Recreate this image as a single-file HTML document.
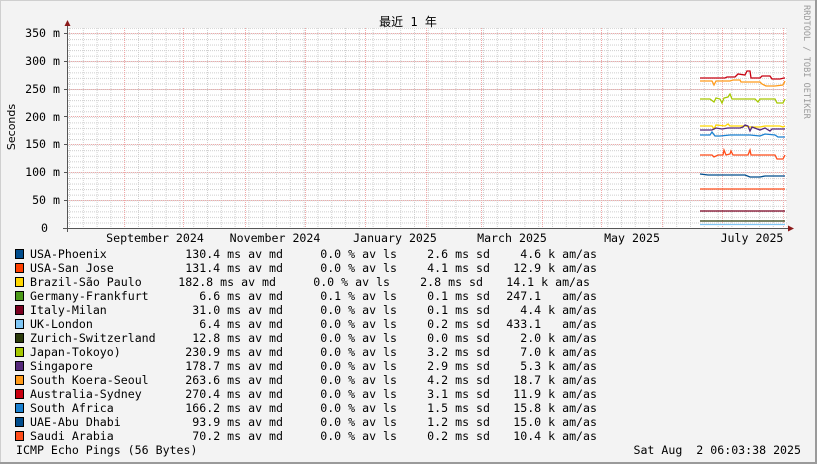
<!DOCTYPE html>
<html><head><meta charset="utf-8"><style>
html,body{margin:0;padding:0;background:#f3f3f3;}
svg{display:block;}
text{font-family:"DejaVu Sans Mono","Liberation Mono",monospace;font-size:11.6px;fill:#000;white-space:pre;}
</style></head><body>
<svg width="817" height="464" viewBox="0 0 817 464" xmlns="http://www.w3.org/2000/svg">
<defs>
<pattern id="hmin" x="0" y="228" width="800" height="5.56" patternUnits="userSpaceOnUse">
<line x1="0" y1="0.5" x2="800" y2="0.5" stroke="#d0d0d0" stroke-width="1" stroke-dasharray="1,1"/>
</pattern>
<pattern id="vmin" x="69" y="0" width="13.8" height="300" patternUnits="userSpaceOnUse">
<line x1="0.5" y1="0" x2="0.5" y2="300" stroke="#d0d0d0" stroke-width="1" stroke-dasharray="1,1"/>
</pattern>
</defs>
<rect x="0" y="0" width="817" height="464" fill="#f3f3f3"/>
<rect x="0.5" y="0.5" width="816" height="463" fill="none" stroke="#cfcfcf"/>
<line x1="0" y1="463" x2="817" y2="463" stroke="#9a9a9a" stroke-width="2"/>
<line x1="816" y1="0" x2="816" y2="464" stroke="#9a9a9a" stroke-width="2"/>
<rect x="67" y="28" width="720" height="200" fill="#fff"/>
<rect x="67" y="28" width="720" height="200" fill="url(#hmin)"/>
<rect x="67" y="28" width="720" height="200" fill="url(#vmin)"/>
<g stroke="#f0a8a8" stroke-width="1" stroke-dasharray="1,1">
<line x1="67" y1="200.5" x2="787" y2="200.5"/><line x1="67" y1="172.5" x2="787" y2="172.5"/>
<line x1="67" y1="144.5" x2="787" y2="144.5"/><line x1="67" y1="116.5" x2="787" y2="116.5"/>
<line x1="67" y1="89.5" x2="787" y2="89.5"/><line x1="67" y1="61.5" x2="787" y2="61.5"/>
<line x1="67" y1="33.5" x2="787" y2="33.5"/>
<line x1="124.5" y1="28" x2="124.5" y2="228"/><line x1="183.5" y1="28" x2="183.5" y2="228"/>
<line x1="245.5" y1="28" x2="245.5" y2="228"/><line x1="305.5" y1="28" x2="305.5" y2="228"/>
<line x1="365.5" y1="28" x2="365.5" y2="228"/><line x1="426.5" y1="28" x2="426.5" y2="228"/>
<line x1="481.5" y1="28" x2="481.5" y2="228"/><line x1="542.5" y1="28" x2="542.5" y2="228"/>
<line x1="601.5" y1="28" x2="601.5" y2="228"/><line x1="662.5" y1="28" x2="662.5" y2="228"/>
<line x1="722.5" y1="28" x2="722.5" y2="228"/><line x1="783.5" y1="28" x2="783.5" y2="228"/>
</g>
<g fill="none" stroke-width="1.3">
<polyline stroke="#ff9a1a" points="700,81 712,81 714,85 716,81 730,81 733,80 740,80 741,82 760,82 762,84 766,86 775,86 783,85 785,81"/>
<polyline stroke="#c80010" points="700,78 725,78 727,77 735,77 738,74 745,75 747,71 750,71 751,78 760,78 762,76 770,76 772,79 780,79 784,78 785,78"/>
<polyline stroke="#a6c800" points="700,99 710,99 714,102 716,98 720,99 722,103 724,98 728,97 730,94 732,99 755,99 758,102 760,99 775,99 777,103 783,103 785,99"/>
<polyline stroke="#ffd700" points="700,126 712,126 714,129 716,125 725,126 728,124 730,126 740,126 745,126 750,127 760,127 765,126 780,126 783,127 785,126"/>
<polyline stroke="#55287a" points="700,130 712,130 716,128 722,129 728,128 740,128 743,127 745,125 748,126 750,131 752,127 760,130 765,128 770,131 772,129 785,129"/>
<polyline stroke="#1a80d0" points="700,135 710,135 712,132 715,136 720,136 730,135 740,135 750,135 760,136 765,134 775,135 778,137 785,137"/>
<polyline stroke="#ff4d1a" points="700,155 712,155 714,157 718,155 723,155 724,150 726,155 730,154 731,151 733,155 748,155 750,150 751,155 775,155 777,159 783,159 785,155"/>
<polyline stroke="#004c8c" points="700,174 708,175 730,175 745,175 750,177 760,177 765,176 785,176"/>
<line stroke="#ff4d1a" x1="700" y1="189" x2="785" y2="189"/>
<line stroke="#7a0020" x1="700" y1="211" x2="785" y2="211"/>
<line stroke="#2b3b0b" x1="700" y1="221" x2="785" y2="221"/>
<line stroke="#7fc6f5" x1="700" y1="224.5" x2="785" y2="224.5"/>
</g>
<line x1="67.5" y1="24" x2="67.5" y2="232" stroke="#555" stroke-width="1"/>
<line x1="63" y1="228.5" x2="790" y2="228.5" stroke="#555" stroke-width="1"/>
<polygon points="64.5,26 70.5,26 67.5,20" fill="#8b1a1a"/>
<polygon points="788,225.5 788,231.5 794,228.5" fill="#8b1a1a"/>
<g stroke="#555">
<line x1="64" y1="200.5" x2="67" y2="200.5"/><line x1="64" y1="172.5" x2="67" y2="172.5"/>
<line x1="64" y1="144.5" x2="67" y2="144.5"/><line x1="64" y1="116.5" x2="67" y2="116.5"/>
<line x1="64" y1="89.5" x2="67" y2="89.5"/><line x1="64" y1="61.5" x2="67" y2="61.5"/>
<line x1="64" y1="33.5" x2="67" y2="33.5"/>
</g>
<text x="408" y="26" text-anchor="middle" style="font-family:'DejaVu Sans Mono','Noto Sans CJK SC',monospace;font-size:12px">最近 1 年</text>
<text transform="translate(15,127) rotate(-90)" text-anchor="middle" style="font-family:'DejaVu Sans','Liberation Sans',sans-serif;font-size:11px">Seconds</text>
<text transform="translate(804,5) rotate(90)" style="font-size:8.6px;fill:#999">RRDTOOL / TOBI OETIKER</text>
<g text-anchor="end">
<text x="60" y="37">350 m</text><text x="60" y="65">300 m</text><text x="60" y="93">250 m</text>
<text x="60" y="121">200 m</text><text x="60" y="148">150 m</text><text x="60" y="176">100 m</text>
<text x="60" y="204">50 m</text><text x="48" y="232">0</text>
</g>
<g text-anchor="middle">
<text x="155" y="242">September 2024</text><text x="275" y="242">November 2024</text>
<text x="395" y="242">January 2025</text><text x="512" y="242">March 2025</text>
<text x="632" y="242">May 2025</text><text x="752" y="242">July 2025</text>
</g>
<g stroke="#000" stroke-width="1">
<rect x="15.5" y="249.5" width="8" height="9" fill="#004c8c"/>
<rect x="15.5" y="263.5" width="8" height="9" fill="#ff4000"/>
<rect x="15.5" y="277.5" width="8" height="9" fill="#ffd700"/>
<rect x="15.5" y="291.5" width="8" height="9" fill="#4c9a1a"/>
<rect x="15.5" y="305.5" width="8" height="9" fill="#7a0020"/>
<rect x="15.5" y="319.5" width="8" height="9" fill="#7fc6f5"/>
<rect x="15.5" y="333.5" width="8" height="9" fill="#2b3b0b"/>
<rect x="15.5" y="347.5" width="8" height="9" fill="#a6c800"/>
<rect x="15.5" y="361.5" width="8" height="9" fill="#55287a"/>
<rect x="15.5" y="375.5" width="8" height="9" fill="#ff9a1a"/>
<rect x="15.5" y="389.5" width="8" height="9" fill="#c80010"/>
<rect x="15.5" y="403.5" width="8" height="9" fill="#1a80d0"/>
<rect x="15.5" y="417.5" width="8" height="9" fill="#004c8c"/>
<rect x="15.5" y="431.5" width="8" height="9" fill="#ff4d1a"/>
</g>
<g>
<text x="30" y="258">USA-Phoenix</text>
<text x="30" y="272">USA-San Jose</text>
<text x="30" y="286">Brazil-São Paulo</text>
<text x="30" y="300">Germany-Frankfurt</text>
<text x="30" y="314">Italy-Milan</text>
<text x="30" y="328">UK-London</text>
<text x="30" y="342">Zurich-Switzerland</text>
<text x="30" y="356">Japan-Tokoyo)</text>
<text x="30" y="370">Singapore</text>
<text x="30" y="384">South Koera-Seoul</text>
<text x="30" y="398">Australia-Sydney</text>
<text x="30" y="412">South Africa</text>
<text x="30" y="426">UAE-Abu Dhabi</text>
<text x="30" y="440">Saudi Arabia</text>
</g>
<g text-anchor="end">
<text x="283" y="258">130.4 ms av md</text><text x="397" y="258">0.0 % av ls</text><text x="490" y="258">2.6 ms sd</text><text x="597" y="258">4.6 k am/as</text>
<text x="283" y="272">131.4 ms av md</text><text x="397" y="272">0.0 % av ls</text><text x="490" y="272">4.1 ms sd</text><text x="597" y="272">12.9 k am/as</text>
<text x="276" y="286">182.8 ms av md</text><text x="390" y="286">0.0 % av ls</text><text x="483" y="286">2.8 ms sd</text><text x="590" y="286">14.1 k am/as</text>
<text x="283" y="300">6.6 ms av md</text><text x="397" y="300">0.1 % av ls</text><text x="490" y="300">0.1 ms sd</text><text x="597" y="300">247.1   am/as</text>
<text x="283" y="314">31.0 ms av md</text><text x="397" y="314">0.0 % av ls</text><text x="490" y="314">0.1 ms sd</text><text x="597" y="314">4.4 k am/as</text>
<text x="283" y="328">6.4 ms av md</text><text x="397" y="328">0.0 % av ls</text><text x="490" y="328">0.2 ms sd</text><text x="597" y="328">433.1   am/as</text>
<text x="283" y="342">12.8 ms av md</text><text x="397" y="342">0.0 % av ls</text><text x="490" y="342">0.0 ms sd</text><text x="597" y="342">2.0 k am/as</text>
<text x="283" y="356">230.9 ms av md</text><text x="397" y="356">0.0 % av ls</text><text x="490" y="356">3.2 ms sd</text><text x="597" y="356">7.0 k am/as</text>
<text x="283" y="370">178.7 ms av md</text><text x="397" y="370">0.0 % av ls</text><text x="490" y="370">2.9 ms sd</text><text x="597" y="370">5.3 k am/as</text>
<text x="283" y="384">263.6 ms av md</text><text x="397" y="384">0.0 % av ls</text><text x="490" y="384">4.2 ms sd</text><text x="597" y="384">18.7 k am/as</text>
<text x="283" y="398">270.4 ms av md</text><text x="397" y="398">0.0 % av ls</text><text x="490" y="398">3.1 ms sd</text><text x="597" y="398">11.9 k am/as</text>
<text x="283" y="412">166.2 ms av md</text><text x="397" y="412">0.0 % av ls</text><text x="490" y="412">1.5 ms sd</text><text x="597" y="412">15.8 k am/as</text>
<text x="283" y="426">93.9 ms av md</text><text x="397" y="426">0.0 % av ls</text><text x="490" y="426">1.2 ms sd</text><text x="597" y="426">15.0 k am/as</text>
<text x="283" y="440">70.2 ms av md</text><text x="397" y="440">0.0 % av ls</text><text x="490" y="440">0.2 ms sd</text><text x="597" y="440">10.4 k am/as</text>
</g>
<text x="16" y="454">ICMP Echo Pings (56 Bytes)</text>
<text x="801" y="454" text-anchor="end">Sat Aug  2 06:03:38 2025</text>
</svg>
</body></html>
